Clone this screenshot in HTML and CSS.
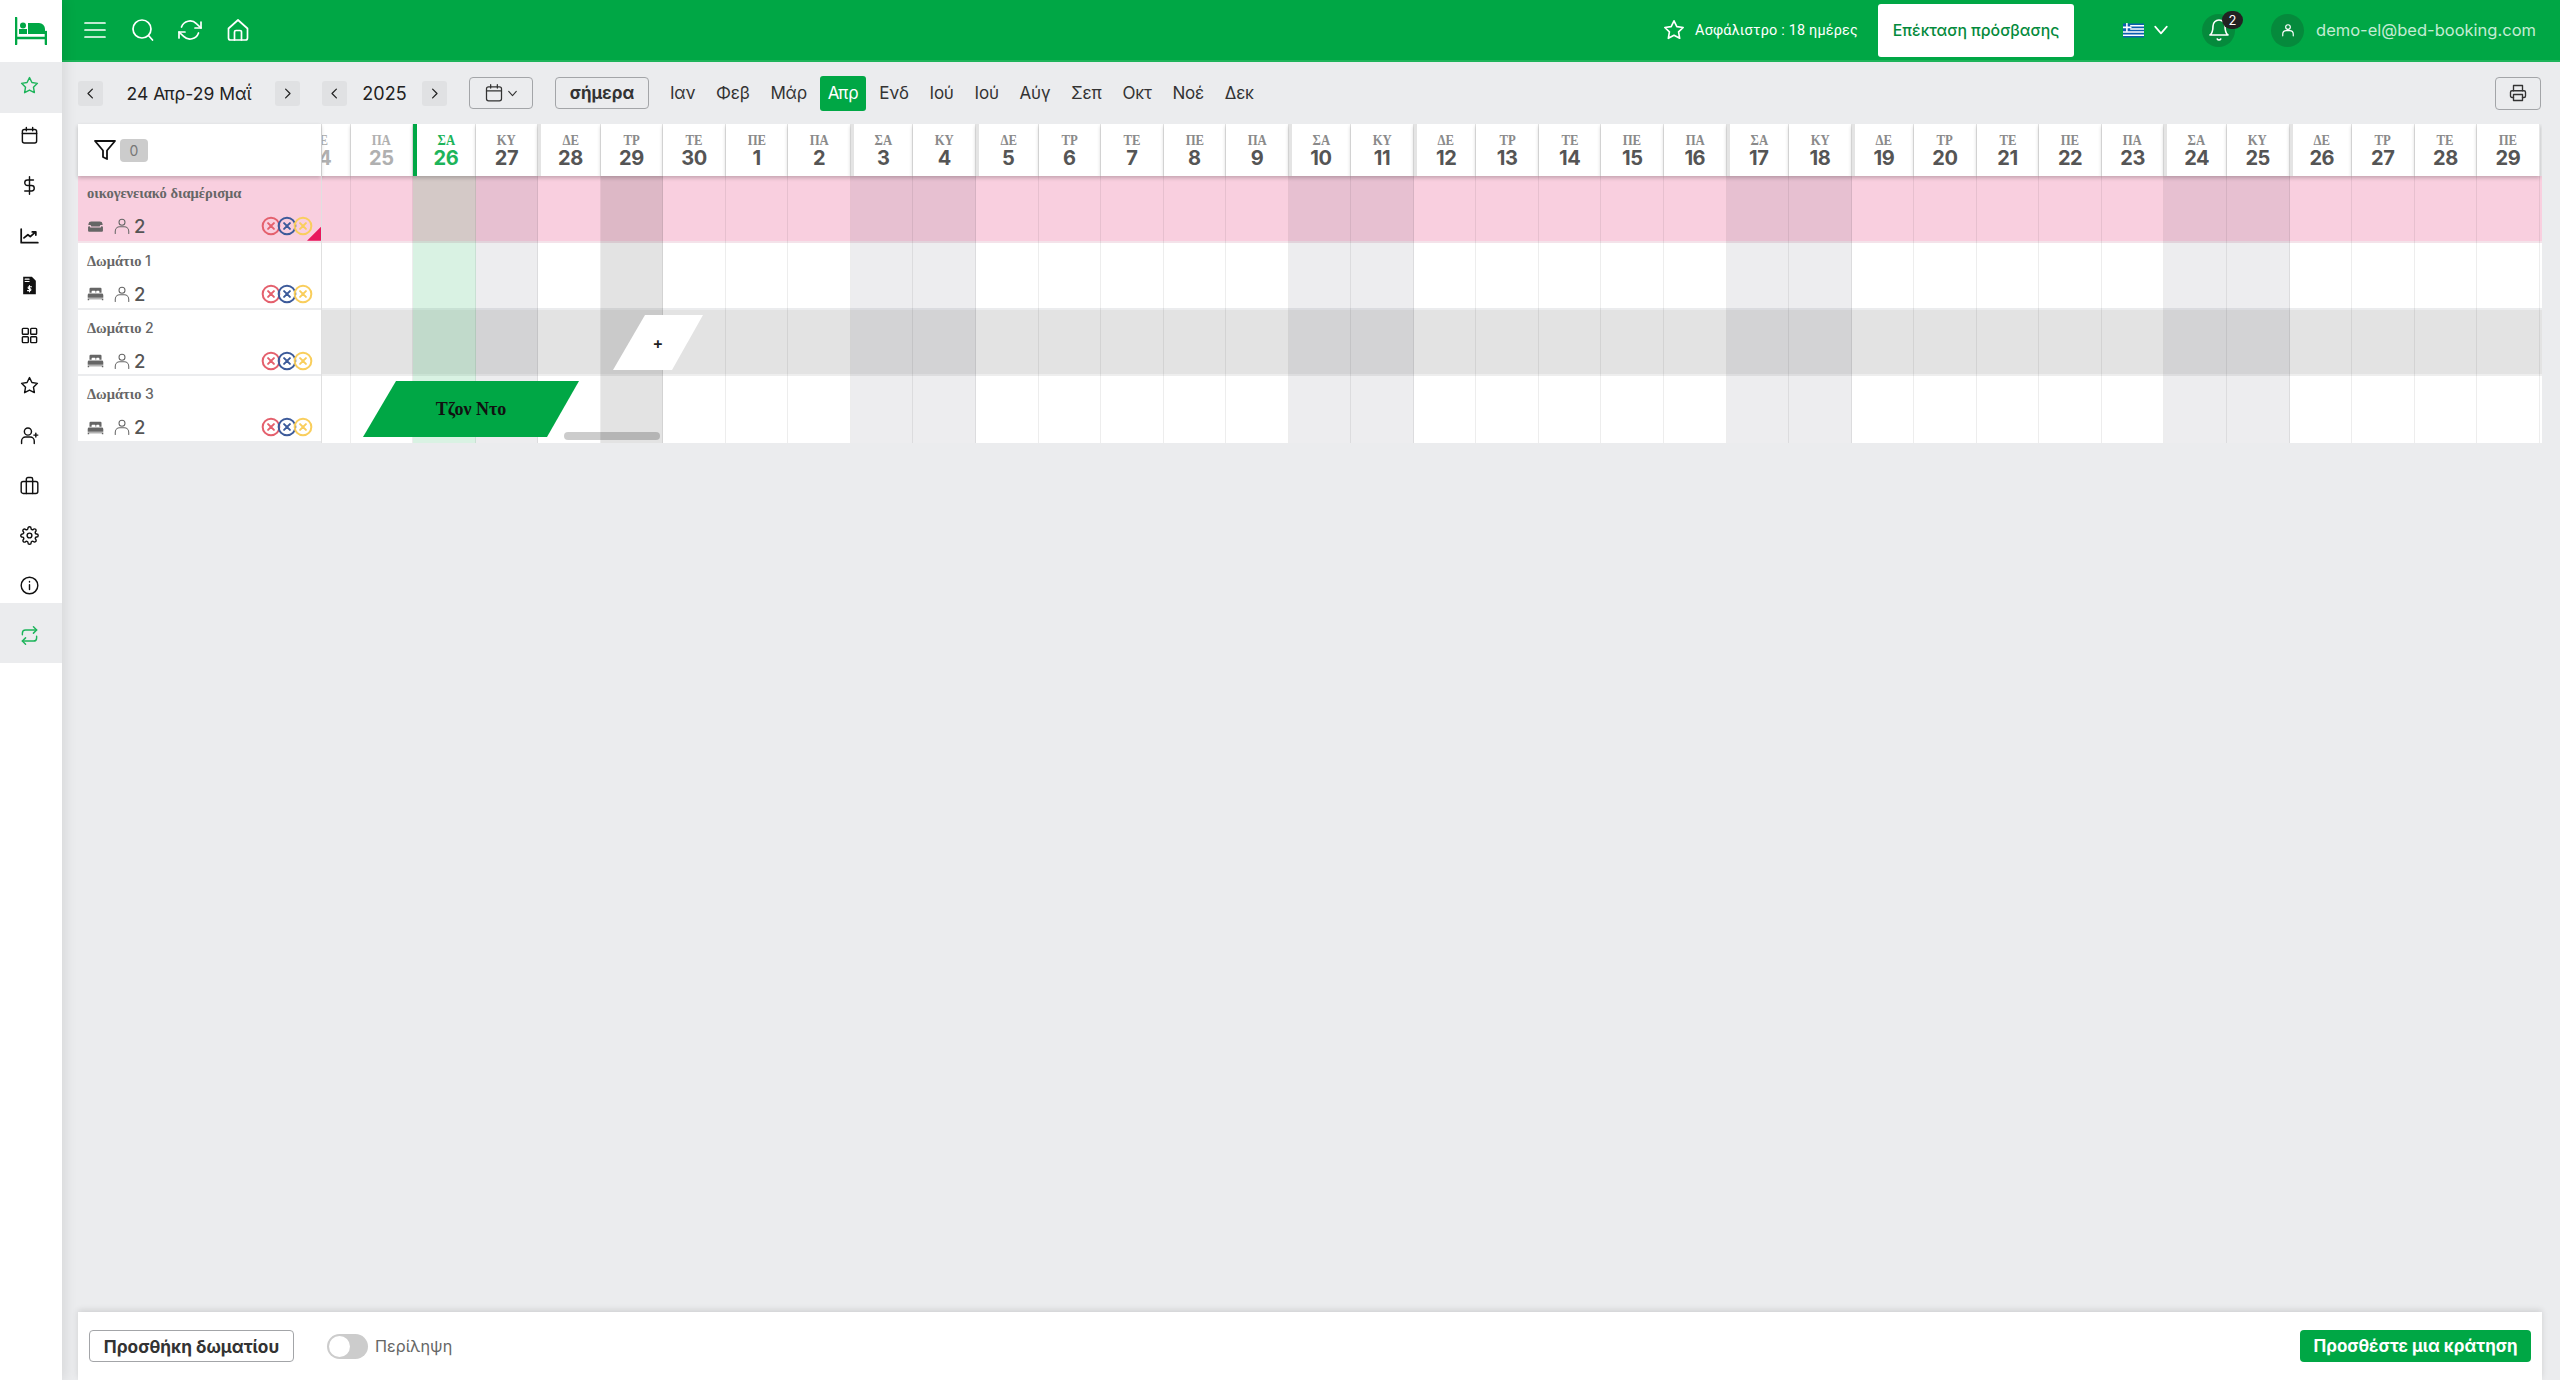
FILE: index.html
```html
<!DOCTYPE html>
<html lang="el">
<head>
<meta charset="utf-8">
<title>Ημερολόγιο κρατήσεων</title>
<link rel="stylesheet" href="styles.css">
</head>
<body>
<svg class="defs" aria-hidden="true">
  <symbol id="i-star" viewBox="0 0 24 24"><polygon points="12 2 15.09 8.26 22 9.27 17 14.14 18.18 21.02 12 17.77 5.82 21.02 7 14.14 2 9.27 8.91 8.26 12 2"/></symbol>
  <symbol id="i-cal" viewBox="0 0 24 24"><rect x="3" y="4.5" width="18" height="17" rx="2.5"/><path d="M3 9.5h18M8 2v4M16 2v4"/></symbol>
  <symbol id="i-user" viewBox="0 0 24 24"><circle cx="12" cy="7" r="4"/><path d="M3 22v-3a6 6 0 0 1 6-6h6a6 6 0 0 1 6 6v3"/></symbol>
  <symbol id="i-bed" viewBox="0 0 24 24"><path class="solid" d="M5 4h14a1.500 1.500 0 0 1 1.500 1.500V11h-3V9a1 1 0 0 0-1-1h-2.500a1 1 0 0 0-1 1v2h-1V9a1 1 0 0 0-1-1H7.500a1 1 0 0 0-1 1v2h-3V5.500A1.500 1.500 0 0 1 5 4zM3 12h18a2 2 0 0 1 2 2v4H1v-4a2 2 0 0 1 2-2zM1 19h22v2.500h-2V20H3v1.500H1z"/></symbol>
  <symbol id="i-sofa" viewBox="0 0 24 24"><path class="solid" d="M6 5h12a4 4 0 0 1 4 3.500V10h-2a2 2 0 0 0-2 2H6a2 2 0 0 0-2-2H2V8.500A4 4 0 0 1 6 5zM3 11.500a1.500 1.500 0 0 1 1.500 1.500v.5h15V13a1.500 1.500 0 0 1 3 0v5a1.500 1.500 0 0 1-1.500 1.500H3A1.500 1.500 0 0 1 1.500 18v-5A1.500 1.500 0 0 1 3 11.500z"/></symbol>
  <symbol id="i-x" viewBox="0 0 24 24"><circle cx="12" cy="12" r="10"/><path d="M8.500 8.500l7 7M15.500 8.500l-7 7"/></symbol>
  <symbol id="i-left" viewBox="0 0 24 24"><polyline points="15 5 8 12 15 19"/></symbol>
  <symbol id="i-right" viewBox="0 0 24 24"><polyline points="9 5 16 12 9 19"/></symbol>
  <symbol id="i-down" viewBox="0 0 24 24"><polyline points="5 8 12 16 19 8"/></symbol>
</svg>

<div class="app">
  <aside class="sidebar">
    <div class="logo">
      <svg class="logo-svg" viewBox="0 0 32 28"><path d="M1 1v26M1 21h30M31 15v12"/><circle class="fill" cx="8" cy="8.500" r="3"/><path class="fill" d="M4 12h8v5H4zM13 6h11a6 6 0 0 1 6 6v5H13z"/></svg>
    </div>
    <nav class="side-nav">
      <a class="side-item is-active is-first"><svg class="ico"><use href="#i-star"/></svg></a>
      <a class="side-item"><svg class="ico"><use href="#i-cal"/></svg></a>
      <a class="side-item"><svg class="ico" viewBox="0 0 24 24"><path d="M12 1v22M17 5H9.500a3.500 3.500 0 0 0 0 7h5a3.500 3.500 0 0 1 0 7H6"/></svg></a>
      <a class="side-item"><svg class="ico" viewBox="0 0 24 24"><path d="M1.500 4v17h21M5 15l5-4 3 2.500 6-5.500M15.500 7.500h4.500v4" class="thick"/></svg></a>
      <a class="side-item"><svg class="ico" viewBox="0 0 24 24"><path class="solid" d="M4 1h11l5 5v17H4z"/><path class="cut" d="M6.500 4h5M6.500 7h5M12 12v8M14.500 13.500h-3.300a1.300 1.300 0 0 0 0 2.500h1.600a1.300 1.300 0 0 1 0 2.500H9.500"/></svg></a>
      <a class="side-item"><svg class="ico" viewBox="0 0 24 24"><rect x="3" y="3" width="7.500" height="7.500" rx="1"/><rect x="13.500" y="3" width="7.500" height="7.500" rx="1"/><rect x="3" y="13.500" width="7.500" height="7.500" rx="1"/><rect x="13.500" y="13.500" width="7.500" height="7.500" rx="1"/></svg></a>
      <a class="side-item"><svg class="ico"><use href="#i-star"/></svg></a>
      <a class="side-item"><svg class="ico" viewBox="0 0 24 24"><circle cx="10" cy="7" r="4.500"/><path d="M2 22v-3a5 5 0 0 1 5-5h6a5 5 0 0 1 5 5v3M20 9v5M17.500 11.500h5"/></svg></a>
      <a class="side-item"><svg class="ico" viewBox="0 0 24 24"><rect x="1.500" y="7" width="21" height="15" rx="2.500"/><path d="M8 22V4a2 2 0 0 1 2-2h4a2 2 0 0 1 2 2v18"/></svg></a>
      <a class="side-item"><svg class="ico" viewBox="0 0 24 24"><circle cx="12" cy="12" r="3"/><path d="M19.400 15a1.650 1.650 0 0 0 .33 1.820l.06.06a2 2 0 0 1 0 2.830 2 2 0 0 1-2.830 0l-.06-.06a1.650 1.650 0 0 0-1.820-.33 1.650 1.650 0 0 0-1 1.510V21a2 2 0 0 1-2 2 2 2 0 0 1-2-2v-.09A1.650 1.650 0 0 0 9 19.400a1.650 1.650 0 0 0-1.820.33l-.06.06a2 2 0 0 1-2.830 0 2 2 0 0 1 0-2.830l.06-.06a1.650 1.650 0 0 0 .33-1.820 1.650 1.650 0 0 0-1.510-1H3a2 2 0 0 1-2-2 2 2 0 0 1 2-2h.09A1.650 1.650 0 0 0 4.600 9a1.650 1.650 0 0 0-.33-1.820l-.06-.06a2 2 0 0 1 0-2.830 2 2 0 0 1 2.830 0l.06.06a1.650 1.650 0 0 0 1.820.33H9a1.650 1.650 0 0 0 1-1.510V3a2 2 0 0 1 2-2 2 2 0 0 1 2 2v.09a1.650 1.650 0 0 0 1 1.510 1.650 1.650 0 0 0 1.820-.33l.06-.06a2 2 0 0 1 2.830 0 2 2 0 0 1 0 2.830l-.06.06a1.650 1.650 0 0 0-.33 1.820V9a1.650 1.650 0 0 0 1.510 1H21a2 2 0 0 1 2 2 2 2 0 0 1-2 2h-.09a1.650 1.650 0 0 0-1.510 1z"/></svg></a>
      <a class="side-item"><svg class="ico" viewBox="0 0 24 24"><circle cx="12" cy="12" r="10.500"/><path d="M12 11v6M12 7v.5"/></svg></a>
      <a class="side-item is-active is-last"><svg class="ico" viewBox="0 0 24 24"><polyline points="17 1 21 5 17 9"/><path d="M3 11V9a4 4 0 0 1 4-4h14"/><polyline points="7 23 3 19 7 15"/><path d="M21 13v2a4 4 0 0 1-4 4H3"/></svg></a>
    </nav>
  </aside>

  <div class="main">
    <header class="topbar">
      <div class="top-left">
        <svg class="top-ico" viewBox="0 0 24 24"><path d="M2 5h20M2 12h20M2 19h20"/></svg>
        <svg class="top-ico" viewBox="0 0 24 24"><circle cx="11" cy="11" r="9"/><path d="M21.500 22l-4-4.500"/></svg>
        <svg class="top-ico" viewBox="0 0 24 24"><polyline points="23 4 23 10 17 10"/><polyline points="1 20 1 14 7 14"/><path d="M3.510 9a9 9 0 0 1 14.850-3.360L23 10M1 14l4.640 4.360A9 9 0 0 0 20.490 15"/></svg>
        <svg class="top-ico" viewBox="0 0 24 24"><path d="M2.500 10.500 12 2l9.500 8.500V20a2 2 0 0 1-2 2h-15a2 2 0 0 1-2-2z"/><path d="M8.500 22v-8a1.500 1.500 0 0 1 1.500-1.500h4a1.500 1.500 0 0 1 1.500 1.500v8"/></svg>
      </div>
      <div class="top-right">
        <svg class="premium-star"><use href="#i-star"/></svg>
        <span class="premium-text">Ασφάλιστρο : 18 ημέρες</span>
        <a class="extend-btn">Επέκταση πρόσβασης</a>
        <svg class="flag" viewBox="0 0 27 18"><rect width="27" height="18" fill="#0d5eaf"/><path d="M10 3h17M10 7h17M0 11h27M0 15h27" stroke="#fff" stroke-width="2"/><path d="M5 0v10M0 5h10" stroke="#fff" stroke-width="2"/></svg>
        <svg class="flag-chevron"><use href="#i-down"/></svg>
        <div class="round-btn bell">
          <svg class="round-ico" viewBox="0 0 24 24"><path d="M18 8A6 6 0 0 0 6 8c0 7-3 9-3 9h18s-3-2-3-9"/><path d="M13.730 21a2 2 0 0 1-3.460 0"/></svg>
          <span class="badge">2</span>
        </div>
        <div class="round-btn avatar"><svg class="round-ico small"><use href="#i-user"/></svg></div>
        <span class="email">demo-el@bed-booking.com</span>
      </div>
    </header>

    <div class="toolbar">
      <button class="nav-btn"><svg class="chev"><use href="#i-left"/></svg></button>
      <span class="range">24 Απρ-29 Μαΐ</span>
      <button class="nav-btn"><svg class="chev"><use href="#i-right"/></svg></button>
      <button class="nav-btn sep"><svg class="chev"><use href="#i-left"/></svg></button>
      <span class="year">2025</span>
      <button class="nav-btn"><svg class="chev"><use href="#i-right"/></svg></button>
      <button class="outline-btn cal-btn sep"><svg class="cal-ico"><use href="#i-cal"/></svg><svg class="cal-chev"><use href="#i-down"/></svg></button>
      <button class="outline-btn today-btn sep">σήμερα</button>
      <div class="months">
        <a class="month">Ιαν</a><a class="month">Φεβ</a><a class="month">Μάρ</a><a class="month is-current">Απρ</a><a class="month">Ενδ</a><a class="month">Ιού</a><a class="month">Ιού</a><a class="month">Αύγ</a><a class="month">Σεπ</a><a class="month">Οκτ</a><a class="month">Νοέ</a><a class="month">Δεκ</a>
      </div>
      <button class="outline-btn print-btn"><svg class="print-ico" viewBox="0 0 24 24"><polyline points="6 9 6 2 18 2 18 9"/><path d="M6 18H4a2 2 0 0 1-2-2v-5a2 2 0 0 1 2-2h16a2 2 0 0 1 2 2v5a2 2 0 0 1-2 2h-2"/><rect x="6" y="14" width="12" height="8"/></svg></button>
    </div>

    <section class="board">
      <div class="rooms">
        <div class="rooms-head">
          <svg class="filter-ico" viewBox="0 0 24 24"><polygon points="22 3 2 3 10 12.460 10 19 14 21 14 12.460 22 3"/></svg>
          <span class="filter-count">0</span>
        </div>
        <div class="room is-pink">
          <div class="room-name">οικογενειακό διαμέρισμα</div>
          <div class="room-meta"><svg class="bed-ico"><use href="#i-sofa"/></svg><svg class="person-ico"><use href="#i-user"/></svg><span class="cap">2</span>
            <span class="chans"><svg class="chan red"><use href="#i-x"/></svg><svg class="chan blue"><use href="#i-x"/></svg><svg class="chan yellow"><use href="#i-x"/></svg></span></div>
          <span class="corner"></span>
        </div>
        <div class="room">
          <div class="room-name">Δωμάτιο <span class="room-no">1</span></div>
          <div class="room-meta"><svg class="bed-ico"><use href="#i-bed"/></svg><svg class="person-ico"><use href="#i-user"/></svg><span class="cap">2</span>
            <span class="chans"><svg class="chan red"><use href="#i-x"/></svg><svg class="chan blue"><use href="#i-x"/></svg><svg class="chan yellow"><use href="#i-x"/></svg></span></div>
        </div>
        <div class="room">
          <div class="room-name">Δωμάτιο <span class="room-no">2</span></div>
          <div class="room-meta"><svg class="bed-ico"><use href="#i-bed"/></svg><svg class="person-ico"><use href="#i-user"/></svg><span class="cap">2</span>
            <span class="chans"><svg class="chan red"><use href="#i-x"/></svg><svg class="chan blue"><use href="#i-x"/></svg><svg class="chan yellow"><use href="#i-x"/></svg></span></div>
        </div>
        <div class="room">
          <div class="room-name">Δωμάτιο <span class="room-no">3</span></div>
          <div class="room-meta"><svg class="bed-ico"><use href="#i-bed"/></svg><svg class="person-ico"><use href="#i-user"/></svg><span class="cap">2</span>
            <span class="chans"><svg class="chan red"><use href="#i-x"/></svg><svg class="chan blue"><use href="#i-x"/></svg><svg class="chan yellow"><use href="#i-x"/></svg></span></div>
        </div>
      </div>

      <div class="timeline">
        <div class="tl-grid">
          <div class="band band-1"></div>
          <div class="band band-2"></div>
          <div class="band band-3"></div>
          <div class="band band-4"></div>
          <div class="days">
            <div class="day past"><div class="day-head"><span class="wd">ΠΕ</span><span class="dn">24</span></div><div class="day-body"></div></div>
            <div class="day past"><div class="day-head"><span class="wd">ΠΑ</span><span class="dn">25</span></div><div class="day-body"></div></div>
            <div class="day today"><div class="day-head"><span class="wd">ΣΑ</span><span class="dn">26</span></div><div class="day-body"></div></div>
            <div class="day weekend"><div class="day-head"><span class="wd">ΚΥ</span><span class="dn">27</span></div><div class="day-body"></div></div>
            <div class="day week-start"><div class="day-head"><span class="wd">ΔΕ</span><span class="dn">28</span></div><div class="day-body"></div></div>
            <div class="day closed"><div class="day-head"><span class="wd">ΤΡ</span><span class="dn">29</span></div><div class="day-body"></div></div>
            <div class="day"><div class="day-head"><span class="wd">ΤΕ</span><span class="dn">30</span></div><div class="day-body"></div></div>
            <div class="day"><div class="day-head"><span class="wd">ΠΕ</span><span class="dn">1</span></div><div class="day-body"></div></div>
            <div class="day"><div class="day-head"><span class="wd">ΠΑ</span><span class="dn">2</span></div><div class="day-body"></div></div>
            <div class="day weekend week-start"><div class="day-head"><span class="wd">ΣΑ</span><span class="dn">3</span></div><div class="day-body"></div></div>
            <div class="day weekend"><div class="day-head"><span class="wd">ΚΥ</span><span class="dn">4</span></div><div class="day-body"></div></div>
            <div class="day week-start"><div class="day-head"><span class="wd">ΔΕ</span><span class="dn">5</span></div><div class="day-body"></div></div>
            <div class="day"><div class="day-head"><span class="wd">ΤΡ</span><span class="dn">6</span></div><div class="day-body"></div></div>
            <div class="day"><div class="day-head"><span class="wd">ΤΕ</span><span class="dn">7</span></div><div class="day-body"></div></div>
            <div class="day"><div class="day-head"><span class="wd">ΠΕ</span><span class="dn">8</span></div><div class="day-body"></div></div>
            <div class="day"><div class="day-head"><span class="wd">ΠΑ</span><span class="dn">9</span></div><div class="day-body"></div></div>
            <div class="day weekend week-start"><div class="day-head"><span class="wd">ΣΑ</span><span class="dn">10</span></div><div class="day-body"></div></div>
            <div class="day weekend"><div class="day-head"><span class="wd">ΚΥ</span><span class="dn">11</span></div><div class="day-body"></div></div>
            <div class="day week-start"><div class="day-head"><span class="wd">ΔΕ</span><span class="dn">12</span></div><div class="day-body"></div></div>
            <div class="day"><div class="day-head"><span class="wd">ΤΡ</span><span class="dn">13</span></div><div class="day-body"></div></div>
            <div class="day"><div class="day-head"><span class="wd">ΤΕ</span><span class="dn">14</span></div><div class="day-body"></div></div>
            <div class="day"><div class="day-head"><span class="wd">ΠΕ</span><span class="dn">15</span></div><div class="day-body"></div></div>
            <div class="day"><div class="day-head"><span class="wd">ΠΑ</span><span class="dn">16</span></div><div class="day-body"></div></div>
            <div class="day weekend week-start"><div class="day-head"><span class="wd">ΣΑ</span><span class="dn">17</span></div><div class="day-body"></div></div>
            <div class="day weekend"><div class="day-head"><span class="wd">ΚΥ</span><span class="dn">18</span></div><div class="day-body"></div></div>
            <div class="day week-start"><div class="day-head"><span class="wd">ΔΕ</span><span class="dn">19</span></div><div class="day-body"></div></div>
            <div class="day"><div class="day-head"><span class="wd">ΤΡ</span><span class="dn">20</span></div><div class="day-body"></div></div>
            <div class="day"><div class="day-head"><span class="wd">ΤΕ</span><span class="dn">21</span></div><div class="day-body"></div></div>
            <div class="day"><div class="day-head"><span class="wd">ΠΕ</span><span class="dn">22</span></div><div class="day-body"></div></div>
            <div class="day"><div class="day-head"><span class="wd">ΠΑ</span><span class="dn">23</span></div><div class="day-body"></div></div>
            <div class="day weekend week-start"><div class="day-head"><span class="wd">ΣΑ</span><span class="dn">24</span></div><div class="day-body"></div></div>
            <div class="day weekend"><div class="day-head"><span class="wd">ΚΥ</span><span class="dn">25</span></div><div class="day-body"></div></div>
            <div class="day week-start"><div class="day-head"><span class="wd">ΔΕ</span><span class="dn">26</span></div><div class="day-body"></div></div>
            <div class="day"><div class="day-head"><span class="wd">ΤΡ</span><span class="dn">27</span></div><div class="day-body"></div></div>
            <div class="day"><div class="day-head"><span class="wd">ΤΕ</span><span class="dn">28</span></div><div class="day-body"></div></div>
            <div class="day"><div class="day-head"><span class="wd">ΠΕ</span><span class="dn">29</span></div><div class="day-body"></div></div>
          </div>
        </div>
        <div class="booking">Τζον Ντο</div>
        <div class="new-booking">+</div>
        <div class="scroll-thumb"></div>
      </div>
    </section>

    <footer class="footer">
      <button class="outline-btn add-room">Προσθήκη δωματίου</button>
      <span class="toggle"><span class="knob"></span></span>
      <span class="toggle-label">Περίληψη</span>
      <button class="add-booking">Προσθέστε μια κράτηση</button>
    </footer>
  </div>
</div>
</body>
</html>
```
FILE: styles.css
```css
* { box-sizing: border-box; }
html, body { margin: 0; height: 100%; overflow: hidden; }
body { background: #ebecee; font-family: Inter, "Noto Sans", sans-serif; color: #333; }
.defs { display: none; }
svg { fill: none; stroke: currentColor; stroke-width: 2; stroke-linecap: round; stroke-linejoin: round; flex: none; }
.solid { fill: currentColor; stroke: none; }
button { font-family: inherit; cursor: pointer; }

.app { display: flex; height: 1380px; }

/* sidebar */
.sidebar { width: 62px; flex: none; background: #fff; box-shadow: 3px 0 12px rgba(0, 0, 0, .09); position: relative; z-index: 2; }
.logo { height: 62px; display: flex; align-items: center; justify-content: center; color: #00a745; }
.logo-svg { width: 32px; height: 28px; stroke-width: 2.6; }
.logo-svg .fill { fill: currentColor; stroke: none; }
.side-nav { display: flex; flex-direction: column; margin-top: -2px; isolation: isolate; }
.side-item { height: 50px; display: flex; align-items: center; justify-content: center; padding-right: 3px; color: #111; position: relative; }
.side-item.is-active { color: #1db45a; }
.side-item.is-active::before { content: ""; position: absolute; left: 0; right: 0; background: #ebecee; z-index: -1; }
.is-first::before { top: 2px; bottom: -3px; }
.is-last::before { top: -7px; bottom: -3px; }
.ico { width: 19px; height: 19px; stroke-width: 1.800; }
.thick { stroke-width: 2.200; }
.cut { stroke: #fff; stroke-width: 1.400; }

/* main */
.main { flex: 1; min-width: 0; display: flex; flex-direction: column; padding: 0 18px 0 16px; }

/* topbar */
.topbar { height: 62px; margin: 0 -18px 0 -16px; background: #00a745; border-bottom: 2px solid #1db45a; display: flex; align-items: center; justify-content: space-between; color: #fff; padding-left: 21px; flex: none; }
.top-left { display: flex; align-items: center; gap: 23.500px; }
.top-ico { width: 24px; height: 24px; stroke-width: 1.700; }
.top-right { display: flex; align-items: center; height: 100%; }
.premium-star { width: 22px; height: 22px; margin-right: 10px; stroke-width: 1.800; }
.premium-text { font-family: Roboto, sans-serif; font-size: 14.400px; letter-spacing: .2px; color: #fff; margin-right: 20px; white-space: nowrap; }
.extend-btn { width: 196px; height: 53px; background: #fff; border-radius: 3px; color: #048a3c; font-size: 15.800px; font-weight: 500; display: flex; align-items: center; justify-content: center; white-space: nowrap; margin-right: 49px; }
.flag { width: 21px; height: 15px; stroke: none; }
.flag-chevron { width: 20px; height: 20px; margin: 0 15px 0 7px; }
.round-btn { width: 33px; height: 33px; border-radius: 50%; background: #058a3c; display: flex; align-items: center; justify-content: center; position: relative; }
.bell { margin-left: 16px; }
.round-ico { width: 24px; height: 24px; stroke-width: 1.600; }
.round-ico.small { width: 14px; height: 14px; stroke-width: 2; }
.badge { position: absolute; top: -3px; right: -8px; width: 21px; height: 18px; border-radius: 9px; background: #222; color: #fff; font-size: 13px; text-align: center; line-height: 18px; }
.avatar { margin-left: 36px; }
.email { margin: 0 24px 0 12px; font-size: 16.500px; color: #c3ecd3; white-space: nowrap; }

/* toolbar */
.toolbar { height: 62px; display: flex; align-items: center; flex: none; }
.nav-btn { width: 25px; height: 25px; border: 0; border-radius: 3px; background: #e0e1e3; color: #222; display: flex; align-items: center; justify-content: center; padding: 0; }
.chev { width: 15px; height: 15px; stroke-width: 2; }
.range { width: 172px; text-align: center; font-size: 17.500px; color: #222; white-space: nowrap; }
.year { width: 75px; text-align: center; font-size: 18px; color: #222; }
.sep { margin-left: 22px; }
.outline-btn { border: 1.500px solid #a3a5a8; border-radius: 4px; background: transparent; color: #333; }
.cal-btn { width: 64px; height: 32px; display: flex; align-items: center; justify-content: center; gap: 2px; padding: 0; }
.cal-ico { width: 20px; height: 20px; stroke-width: 1.500; }
.cal-chev { width: 13px; height: 13px; }
.today-btn { width: 94px; height: 32px; font-size: 17px; font-weight: 700; padding: 0; }
.months { display: flex; align-items: center; margin-left: 13px; gap: 4.800px; }
.month { padding: 8px; font-size: 17px; line-height: 19px; color: #333; border-radius: 3px; font-weight: 400; letter-spacing: -.2px; }
.month.is-current { background: #00a745; color: #fff; }
.print-btn { width: 46px; height: 33px; margin-left: auto; margin-right: 1px; display: flex; align-items: center; justify-content: center; padding: 0; }
.print-ico { width: 18px; height: 18px; stroke-width: 1.800; }

/* board */
.board { display: flex; align-items: stretch; flex: none; height: 319px; }
.rooms { width: 244px; flex: none; display: flex; flex-direction: column; border-right: 1px solid #e0e0e0; position: relative; z-index: 1; }
.rooms-head { height: 52px; background: #fff; display: flex; align-items: center; padding-left: 15px; gap: 3px; box-shadow: 0 2px 4px rgba(0, 0, 0, .22); position: relative; z-index: 1; flex: none; }
.filter-ico { width: 24px; height: 24px; color: #111; stroke-width: 1.800; }
.filter-count { width: 28px; height: 23px; border-radius: 4px; background: #ccc; color: #777; font-size: 14px; display: flex; align-items: center; justify-content: center; }
.room { height: 66.750px; background: #fff; border-bottom: 2px solid #ebecee; padding: 9px 9px 0; position: relative; flex: none; }
.room.is-pink { background: #f9cfdf; border-bottom-color: #f4e3ea; }
.room-name { font-family: "Liberation Serif", serif; font-weight: 700; font-size: 14.500px; line-height: 17px; color: #666; white-space: nowrap; }
.room-no { font-family: Inter, sans-serif; font-weight: 500; font-size: 14px; }
.room-meta { display: flex; align-items: center; margin-top: 14px; color: #555; height: 20px; }
.bed-ico { width: 17px; height: 17px; color: #666; }
.person-ico { width: 18px; height: 20px; margin-left: 9px; color: #666; stroke-width: 1.400; }
.cap { margin-left: 3px; font-size: 18.500px; font-weight: 500; color: #555; }
.chans { display: flex; margin-left: auto; margin-right: -1px; }
.chan { width: 20px; height: 20px; margin-left: -4px; stroke-width: 2.400; }
.chan.red { color: #e4606d; }
.chan.blue { color: #3c5a9a; }
.chan.yellow { color: #f9ce5c; }
.corner { position: absolute; right: 0; bottom: 0; width: 14px; height: 14px; background: #e8175d; clip-path: polygon(100% 0, 100% 100%, 0 100%); }

.timeline { flex: 1; min-width: 0; position: relative; overflow: hidden; }
.tl-grid { display: grid; grid-template-columns: repeat(36, 62.560px) 2px; grid-template-rows: 52px repeat(4, 66.750px); margin-left: -34px; width: max-content; }
.band { grid-column: 1 / -1; background: #fff; border-bottom: 2px solid #ebecee; }
.band-1 { grid-row: 2; background: #f9cfdf; border-bottom-color: #f4e3ea; }
.band-2 { grid-row: 3; }
.band-3 { grid-row: 4; background: #e3e3e3; border-bottom-color: #eee; }
.band-4 { grid-row: 5; border-bottom: 0; }
.days { grid-area: 1 / 1 / 6 / -1; display: flex; }
.day { width: 62.560px; flex: none; display: flex; flex-direction: column; }
.day-head { height: 52px; flex: none; background: #fff; border-right: 1.500px solid #e6e6e6; display: flex; flex-direction: column; align-items: center; padding-top: 9px; box-shadow: 0 2px 4px rgba(0, 0, 0, .22); position: relative; }
.wd { font-family: "Liberation Serif", serif; font-weight: 700; font-size: 15px; line-height: 14px; color: #8a8a8a; transform: scaleX(.85); }
.dn { font-size: 20px; line-height: 21px; font-weight: 700; color: #555; letter-spacing: -.4px; margin-top: 1px; }
.day-body { flex: 1; border-right: 1.500px solid rgba(0, 0, 0, .07); }
.past .wd, .past .dn { color: #b0b0b0; }
.today .wd, .today .dn { color: #1db45a; }
.today .day-head { border-left: 4px solid #00a745; }
.today .day-body { background: rgba(0, 167, 69, .15); }
.weekend .day-body { background: rgba(20, 30, 50, .08); }
.closed .day-body { background: rgba(0, 0, 0, .11); }
.week-start .day-head { border-left: 3px solid #e4e4e4; }

.booking { position: absolute; left: 41px; top: 257px; width: 216px; height: 56px; background: #00a745; clip-path: polygon(33px 0, 100% 0, 184px 100%, 0 100%); color: #111; font-family: "Liberation Serif", serif; font-weight: 700; font-size: 18px; display: flex; align-items: center; justify-content: center; }
.new-booking { position: absolute; left: 291px; top: 191px; width: 90px; height: 55px; background: #fff; clip-path: polygon(32px 0, 100% 0, 59px 100%, 0 100%); color: #222; font-size: 16px; font-weight: 600; display: flex; align-items: center; justify-content: center; }
.scroll-thumb { position: absolute; left: 242px; top: 308px; width: 96px; height: 8px; border-radius: 4px; background: rgba(0, 0, 0, .2); }

/* footer */
.footer { margin-top: auto; height: 68px; background: #fff; box-shadow: 0 -2px 6px rgba(0, 0, 0, .12); display: flex; align-items: center; padding: 0 11px; flex: none; }
.add-room { width: 205px; height: 32px; font-size: 17.300px; font-weight: 700; padding: 0; color: #333; white-space: nowrap; }
.toggle { width: 41px; height: 25px; border-radius: 13px; background: #ccc; margin-left: 33px; padding: 2px; display: flex; }
.knob { width: 21px; height: 21px; border-radius: 50%; background: #fff; }
.toggle-label { margin-left: 7px; font-size: 16.200px; color: #666; }
.add-booking { margin-left: auto; width: 231px; height: 32px; border: 0; border-radius: 4px; background: #00a745; color: #fff; font-size: 17px; font-weight: 700; padding: 0; white-space: nowrap; }
```
